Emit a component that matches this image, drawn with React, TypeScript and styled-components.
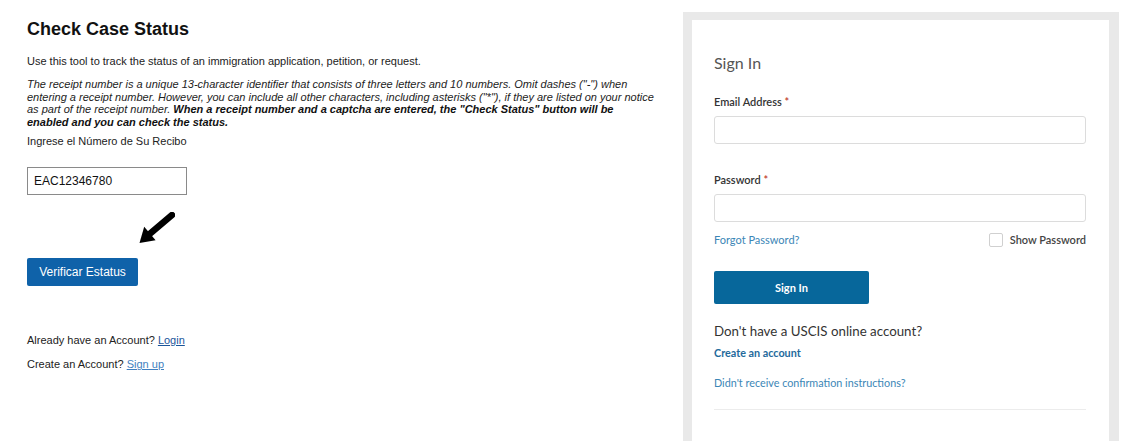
import styled, { createGlobalStyle } from 'styled-components';

const GlobalStyle = createGlobalStyle`
  body {
    margin: 0;
    background: #fff;
  }
`;

const Page = styled.div`
  display: flex;
  align-items: flex-start;
  height: 441px;
  overflow: hidden;
`;

const CaseColumn = styled.section`
  width: 656px;
  padding: 18px 0 0 27px;
  font-family: "Liberation Sans", Arial, sans-serif;
  color: #111;
`;

const Title = styled.h1`
  margin: 0;
  font-size: 18px;
  line-height: 22px;
  font-weight: 700;
  color: #111;
`;

const Text = styled.p<{ $top: number }>`
  margin: ${(p) => p.$top}px 0 0;
  font-size: 11px;
  line-height: 13px;
  color: #222;
`;

const Note = styled.p`
  margin: 10px 0 0;
  width: 628px;
  font-size: 11px;
  line-height: 12.6px;
  font-style: italic;
  color: #222;

  strong {
    color: #111;
  }
`;

const ReceiptInput = styled.input`
  display: block;
  box-sizing: border-box;
  margin-top: 19px;
  width: 160px;
  height: 28px;
  padding: 0 6px;
  border: 1px solid #8a8a8a;
  border-radius: 0;
  font-family: "Liberation Sans", Arial, sans-serif;
  font-size: 12px;
  color: #111;
  outline: none;
`;

const Pointer = styled.svg`
  display: block;
  margin: 17px 0 0 112px;
`;

const CheckButton = styled.button`
  display: block;
  margin-top: 14px;
  width: 111px;
  height: 28px;
  padding: 0;
  border: none;
  border-radius: 2px;
  background: #0f62a9;
  color: #fff;
  font-family: "Liberation Sans", Arial, sans-serif;
  font-size: 12px;
`;

const Link = styled.a<{ $light?: boolean }>`
  color: ${(p) => (p.$light ? '#3f7fc0' : '#1a559a')};
  text-decoration: underline;
`;

const Panel = styled.aside`
  box-sizing: border-box;
  margin-top: 12px;
  width: 436px;
  height: 429px;
  padding: 8px 10px 0 9px;
  background: #e9e9e9;
`;

const Card = styled.div`
  box-sizing: border-box;
  height: 100%;
  padding: 33px 23px 0 22px;
  background: #fff;
  font-family: Lato, "Open Sans", sans-serif;
  color: #333;
`;

const CardTitle = styled.h2`
  margin: 0;
  font-size: 16px;
  line-height: 20px;
  font-weight: 400;
  color: #555;
`;

const Label = styled.label<{ $top: number }>`
  display: block;
  margin-top: ${(p) => p.$top}px;
  font-size: 11px;
  line-height: 14px;
  font-weight: 600;
  color: #333;

  span {
    color: #c0392b;
  }
`;

const TextField = styled.input`
  display: block;
  box-sizing: border-box;
  margin-top: 7px;
  width: 100%;
  height: 28px;
  border: 1px solid #dcdcdc;
  border-radius: 3px;
  outline: none;
`;

const OptionsRow = styled.div`
  display: flex;
  justify-content: space-between;
  align-items: center;
  margin-top: 11px;
  height: 14px;
  font-size: 11px;
  line-height: 14px;
`;

const SoftLink = styled.a<{ $bold?: boolean }>`
  color: ${(p) => (p.$bold ? '#1f6a9c' : '#3b86b6')};
  font-weight: ${(p) => (p.$bold ? 700 : 400)};
  text-decoration: none;
`;

const ShowPassword = styled.label`
  display: flex;
  align-items: center;
  gap: 7px;
  color: #444;
  font-weight: 600;
`;

const Box = styled.span`
  box-sizing: border-box;
  width: 14px;
  height: 14px;
  border: 1px solid #d0d0d0;
  border-radius: 2px;
`;

const SignInButton = styled.button`
  display: block;
  margin-top: 24px;
  width: 155px;
  height: 33px;
  border: none;
  border-radius: 2px;
  background: #07679b;
  color: #fff;
  font-family: Lato, "Open Sans", sans-serif;
  font-size: 11px;
  font-weight: 700;
`;

const Prompt = styled.h3`
  margin: 18px 0 0;
  font-size: 13.3px;
  line-height: 18px;
  font-weight: 400;
  color: #333;
`;

const LinkLine = styled.div<{ $top: number }>`
  margin-top: ${(p) => p.$top}px;
  font-size: 10.8px;
  line-height: 14px;
`;

const Divider = styled.hr`
  margin: 19px 0 0;
  border: none;
  border-top: 1px solid #ececec;
`;

function App() {
  return (
    <Page>
      <GlobalStyle />
      <CaseColumn>
        <Title>Check Case Status</Title>
        <Text $top={15}>
          Use this tool to track the status of an immigration application, petition, or request.
        </Text>
        <Note>
          The receipt number is a unique 13-character identifier that consists of three letters and 10
          numbers. Omit dashes ("-") when entering a receipt number. However, you can include all other
          characters, including asterisks ("*"), if they are listed on your notice as part of the receipt
          number. <strong>When a receipt number and a captcha are entered, the "Check Status" button will be
          enabled and you can check the status.</strong>
        </Note>
        <Text $top={7}>Ingrese el Número de Su Recibo</Text>
        <ReceiptInput defaultValue="EAC12346780" />
        <Pointer width="36" height="32" viewBox="0 0 36 32">
          <line x1="33" y1="3" x2="10" y2="22.5" stroke="#000" strokeWidth="6.5" strokeLinecap="round" />
          <polygon points="0.5,31 5.2,14.8 16.6,28.2" fill="#000" />
        </Pointer>
        <CheckButton>Verificar Estatus</CheckButton>
        <Text $top={48}>
          Already have an Account? <Link href="#">Login</Link>
        </Text>
        <Text $top={11}>
          Create an Account? <Link href="#" $light>Sign up</Link>
        </Text>
      </CaseColumn>

      <Panel>
        <Card>
          <CardTitle>Sign In</CardTitle>
          <Label $top={22}>
            Email Address <span>*</span>
          </Label>
          <TextField />
          <Label $top={29}>
            Password <span>*</span>
          </Label>
          <TextField type="password" />
          <OptionsRow>
            <SoftLink href="#">Forgot Password?</SoftLink>
            <ShowPassword>
              <Box />
              Show Password
            </ShowPassword>
          </OptionsRow>
          <SignInButton>Sign In</SignInButton>
          <Prompt>Don't have a USCIS online account?</Prompt>
          <LinkLine $top={6}>
            <SoftLink href="#" $bold>Create an account</SoftLink>
          </LinkLine>
          <LinkLine $top={16}>
            <SoftLink href="#">Didn't receive confirmation instructions?</SoftLink>
          </LinkLine>
          <Divider />
        </Card>
      </Panel>
    </Page>
  );
}

export default App;
